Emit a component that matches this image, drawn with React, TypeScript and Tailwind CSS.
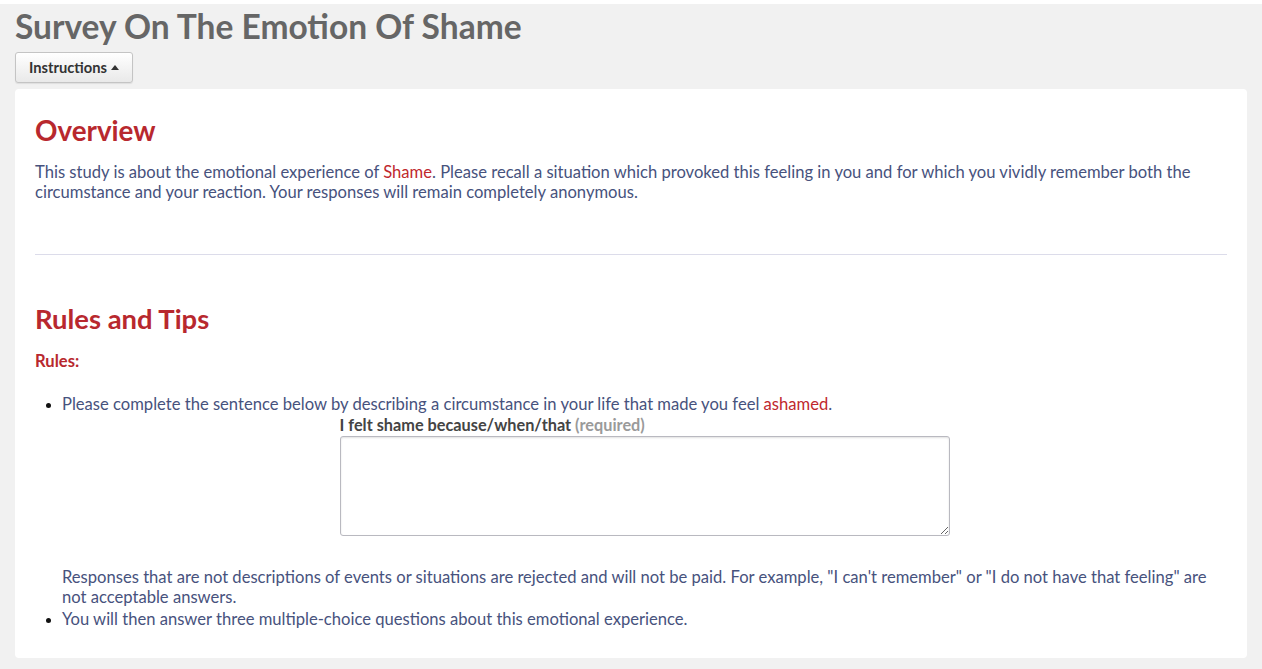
import { useState } from 'react';

const App = () => {
    const [text, setText] = useState('');

    return (
        <div className="min-h-[669px] bg-[#f1f1f1] font-['Lato',sans-serif] border-t-4 border-white">
            <div className="px-[15px]">
                <h1 className="text-[33.5px] font-bold leading-[40px] text-[#666666] pt-[2px]">
                    Survey On The Emotion Of Shame
                </h1>
                <button className="mt-[6px] h-[31px] px-[13px] text-[14.7px] font-bold text-[#333] rounded-[3px] border border-[#c4c4c4] bg-gradient-to-b from-white to-[#e9e9e9] shadow-[0_1px_1px_rgba(0,0,0,0.08)] flex items-center gap-[3px]">
                    Instructions
                    <svg width="8" height="5" viewBox="0 0 8 5" className="ml-[1px]">
                        <path d="M0 5 L4 0 L8 5 Z" fill="#333" />
                    </svg>
                </button>
                <div className="mt-[6px] bg-white rounded-[4px] px-[20px] pt-[27px] pb-[29px] text-[16.6px] leading-[20px] text-[#47527d]">
                    <h2 className="text-[27.8px] font-bold leading-[30px] text-[#b8282e]">
                        Overview
                    </h2>
                    <p className="mt-[16px]">
                        This study is about the emotional experience of{' '}
                        <span className="text-[#c0282d]">Shame</span>. Please recall a
                        situation which provoked this feeling in you and for which you
                        vividly remember both the circumstance and your reaction. Your
                        responses will remain completely anonymous.
                    </p>
                    <hr className="mt-[52px] border-0 border-t border-[#dcdcea]" />
                    <h2 className="mt-[49px] text-[27.4px] font-bold leading-[30px] text-[#b8282e]">
                        Rules and Tips
                    </h2>
                    <p className="mt-[17px] text-[16.6px] font-bold text-[#b8282e]">Rules:</p>
                    <ul className="mt-[23px] list-disc pl-[27px] marker:text-[#111] marker:text-[14px]">
                        <li>
                            Please complete the sentence below by describing a circumstance in
                            your life that made you feel{' '}
                            <span className="text-[#c0282d]">ashamed</span>.
                            <div className="flex justify-center">
                                <div className="w-[610px]">
                                    <label className="block text-[16.3px] font-bold leading-[22px] text-[#444]">
                                        I felt shame because/when/that{' '}
                                        <span className="text-[#9a9a9a]">(required)</span>
                                    </label>
                                    <textarea
                                        value={text}
                                        onChange={(e) => setText(e.target.value)}
                                        className="block w-[610px] h-[100px] border border-[#b9b9c0] rounded-[3px] shadow-[inset_0_1px_2px_rgba(0,0,0,0.12)] outline-none p-2"
                                    />
                                </div>
                            </div>
                            <p className="mt-[31px]">
                                Responses that are not descriptions of events or situations are
                                rejected and will not be paid. For example, "I can't remember" or
                                "I do not have that feeling" are not acceptable answers.
                            </p>
                        </li>
                        <li className="mt-[2px]">
                            You will then answer three multiple-choice questions about this
                            emotional experience.
                        </li>
                    </ul>
                </div>
            </div>
        </div>
    );
};

export default App;
